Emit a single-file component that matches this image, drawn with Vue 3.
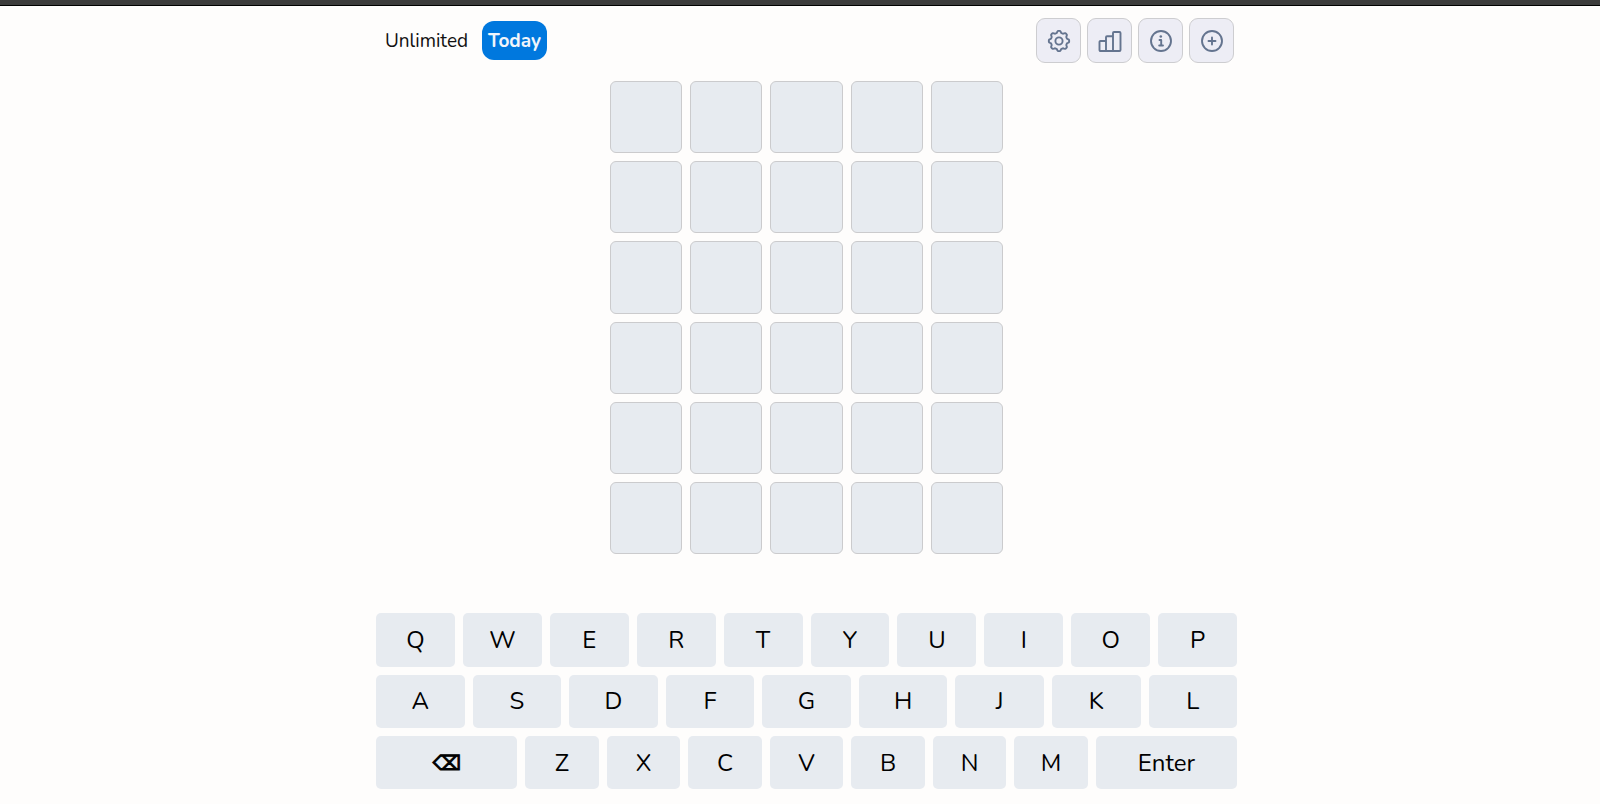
<template>
  <div class="page">
    <div class="top-strip"></div>
    <div class="game">
      <header class="toolbar">
        <nav class="modes">
          <button
            v-for="mode in modes"
            :key="mode"
            type="button"
            class="mode-btn"
            :class="{ active: mode === currentMode }"
            @click="selectMode(mode)"
          >
            {{ mode }}
          </button>
        </nav>
        <div class="actions">
          <button type="button" class="icon-btn" aria-label="Settings">
            <svg viewBox="0 0 24 24">
              <path :d="gearPath" />
              <circle cx="12" cy="12" r="3.6" />
            </svg>
          </button>
          <button type="button" class="icon-btn" aria-label="Statistics">
            <svg viewBox="0 0 24 24">
              <path
                d="M1.500 13a1 1 0 0 1 1-1H8v10H2.500a1 1 0 0 1-1-1zM8 22V8.300a1 1 0 0 1 1-1h6V22M15 22V4a1 1 0 0 1 1-1h5.500a1 1 0 0 1 1 1v17a1 1 0 0 1-1 1zM8 22h7"
              />
            </svg>
          </button>
          <button type="button" class="icon-btn" aria-label="Help">
            <svg viewBox="0 0 24 24">
              <circle cx="12" cy="12" r="10" />
              <path d="M10.500 11h1.700v5.500M10.200 16.500h3.800" />
              <circle class="dot" cx="11.800" cy="7.500" r="1.300" />
            </svg>
          </button>
          <button type="button" class="icon-btn" aria-label="New game">
            <svg viewBox="0 0 24 24">
              <circle cx="12" cy="12" r="10" />
              <path d="M12 8.500v7M8.500 12h7" />
            </svg>
          </button>
        </div>
      </header>

      <main class="board">
        <template v-for="row in 6" :key="row">
          <div v-for="col in 5" :key="col" class="tile">
            {{ guesses[row - 1]?.[col - 1] }}
          </div>
        </template>
      </main>

      <div class="keyboard">
        <div v-for="(row, i) in keyRows" :key="i" class="key-row">
          <button
            v-for="key in row"
            :key="key"
            type="button"
            class="key"
            :class="{ wide: key === BACKSPACE || key === 'Enter', erase: key === BACKSPACE }"
            @click="press(key)"
          >
            {{ key }}
          </button>
        </div>
      </div>
    </div>
  </div>
</template>

<script setup>
import { ref } from "vue";

const BACKSPACE = "⌫";

const modes = ["Unlimited", "Today"];
const currentMode = ref("Today");
const guesses = ref([""]);

const keyRows = [
  [..."QWERTYUIOP"],
  [..."ASDFGHJKL"],
  [BACKSPACE, ..."ZXCVBNM", "Enter"],
];

// eight-toothed gear outline around the center of a 24x24 box
const makeGear = () => {
  const points = [];
  for (let i = 0; i < 96; i++) {
    const angle = (i / 96) * Math.PI * 2;
    const wave = Math.tanh(2 * Math.cos(angle * 8));
    const radius = 9.2 + wave;
    const x = 12 + radius * Math.cos(angle);
    const y = 12 + radius * Math.sin(angle);
    points.push(`${x.toFixed(2)} ${y.toFixed(2)}`);
  }
  return `M${points.join("L")}Z`;
};
const gearPath = makeGear();

const selectMode = (mode) => {
  currentMode.value = mode;
  guesses.value = [""];
};

const press = (key) => {
  const last = guesses.value.length - 1;
  const word = guesses.value[last];

  if (key === BACKSPACE) {
    guesses.value[last] = word.slice(0, -1);
  } else if (key === "Enter") {
    if (word.length === 5 && guesses.value.length < 6) guesses.value.push("");
  } else if (word.length < 5) {
    guesses.value[last] = word + key;
  }
};
</script>

<style>
body {
  margin: 0;
  background: #fefdfc;
}
</style>

<style scoped>
* {
  box-sizing: border-box;
}

.page {
  font-family: Nunito, Lato, "Noto Sans", sans-serif;
  color: #000;
}

.top-strip {
  height: 6px;
  background: #3c3c3c;
  border-bottom: 1px solid #000;
}

.game {
  display: flex;
  flex-direction: column;
  align-items: center;
  padding: 12px 0 14px 13px;
}

.toolbar {
  display: flex;
  justify-content: space-between;
  align-items: center;
  width: 100%;
  max-width: 861px;
  padding: 0 3px;
}

.modes {
  display: flex;
  gap: 8px;
}

.mode-btn {
  height: 39px;
  padding: 0 6px;
  border: none;
  border-radius: 12px;
  background: none;
  color: #111;
  font-family: inherit;
  font-size: 19px;
  cursor: pointer;
}

.mode-btn.active {
  background: #0078de;
  color: #f1f5fb;
  font-weight: 700;
}

.actions {
  display: flex;
  gap: 6px;
}

.icon-btn {
  display: grid;
  place-items: center;
  width: 45px;
  height: 45px;
  padding: 0;
  border: 1px solid #cdcdd0;
  border-radius: 9px;
  background: #ededf5;
  cursor: pointer;
}

.icon-btn svg {
  width: 24px;
  height: 24px;
  fill: none;
  stroke: #64748f;
  stroke-width: 1.9;
  stroke-linejoin: round;
  stroke-linecap: round;
}

.icon-btn .dot {
  fill: #64748f;
  stroke: none;
}

.board {
  display: grid;
  grid-template-columns: repeat(5, 1fr);
  gap: 8px;
  width: 393px;
  margin-top: 18px;
}

.tile {
  display: grid;
  place-items: center;
  aspect-ratio: 1;
  border: 1px solid #cbcbcd;
  border-radius: 6px;
  background: #e7ebf0;
  font-size: 32px;
}

.keyboard {
  display: grid;
  grid-template-rows: repeat(3, 1fr);
  gap: 8px;
  width: 100%;
  max-width: 861px;
  height: 176px;
  margin-top: 59px;
}

.key-row {
  display: flex;
  gap: 8px;
}

.key {
  flex: 1 1 0;
  min-width: 0;
  padding: 0;
  border: none;
  border-radius: 5px;
  background: #e7ebf0;
  color: #000;
  font-family: inherit;
  font-size: 24px;
  cursor: pointer;
}

.key.wide {
  flex-grow: 1.92;
}

.key.erase {
  font-family: "DejaVu Sans", sans-serif;
  font-size: 20px;
  -webkit-text-stroke: 1px #000;
}
</style>
